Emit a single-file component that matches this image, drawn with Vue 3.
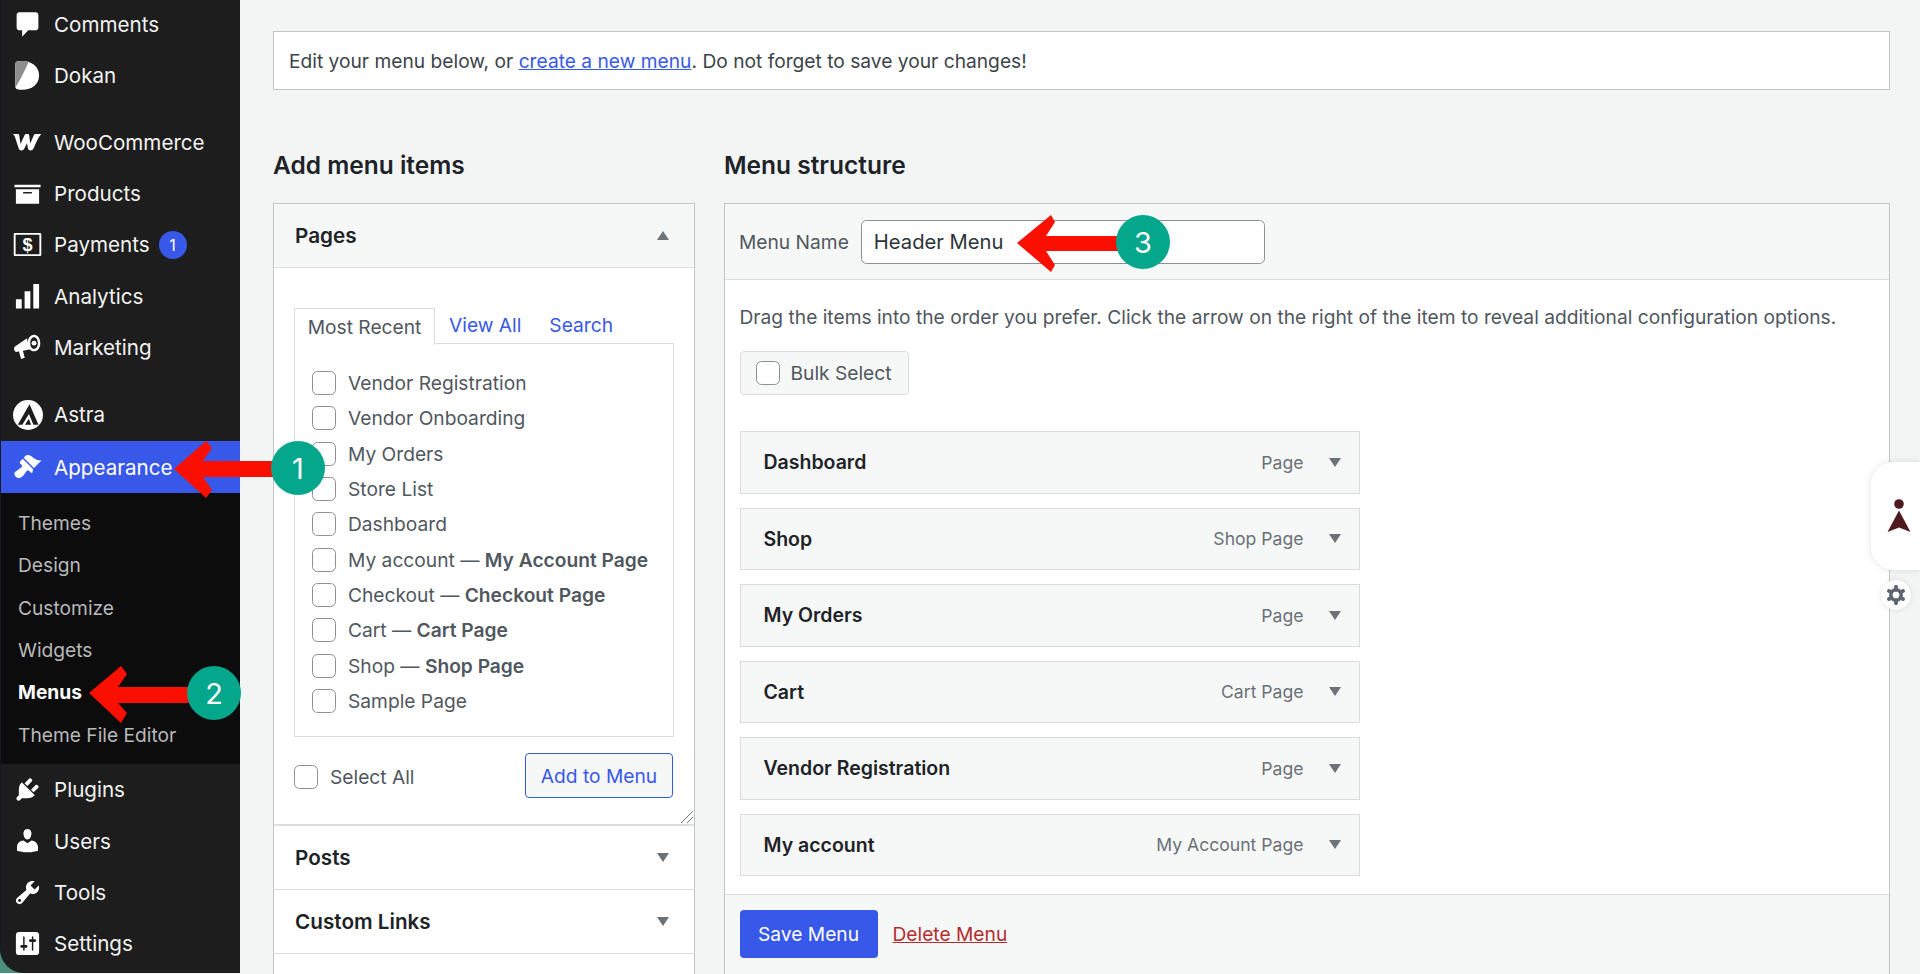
<script setup>
const pages = [
  ['Vendor Registration'], ['Vendor Onboarding'], ['My Orders'], ['Store List'], ['Dashboard'],
  ['My account', 'My Account Page'], ['Checkout', 'Checkout Page'], ['Cart', 'Cart Page'], ['Shop', 'Shop Page'], ['Sample Page'],
]
const items = [
  ['Dashboard', 'Page'], ['Shop', 'Shop Page'], ['My Orders', 'Page'], ['Cart', 'Cart Page'],
  ['Vendor Registration', 'Page'], ['My account', 'My Account Page'],
]
const subs = ['Themes', 'Design', 'Customize', 'Widgets', 'Menus', 'Theme File Editor']
const lower = [
  { n: 'Plugins', d: 'M13.11 4.36L9.87 7.6 8 5.73l3.24-3.24c.35-.34 1.05-.2 1.56.32.52.51.66 1.21.31 1.55zm-8 1.77l.91-1.12 9.01 9.01-1.19.84c-.71.71-2.63 1.16-3.82 1.16H6.14L4.9 17.26c-.59.59-1.54.59-2.12 0-.59-.58-.59-1.53 0-2.12l1.24-1.24v-3.88c0-1.13.4-3.19 1.09-3.89zm7.26 3.97l3.24-3.24c.34-.35 1.04-.21 1.55.31.52.51.66 1.21.31 1.55l-3.24 3.25z' },
  { n: 'Users', d: 'M10 9.25c-2.27 0-2.73-3.44-2.73-3.44C7 4.02 7.82 2 9.97 2c2.16 0 2.98 2.02 2.71 3.81 0 0-.41 3.44-2.68 3.44zm0 2.57L12.72 10c2.39 0 4.52 2.33 4.52 4.53v2.49s-3.65 1.13-7.24 1.13c-3.65 0-7.24-1.13-7.24-1.13v-2.49c0-2.25 1.94-4.48 4.47-4.48z' },
  { n: 'Tools', d: 'M16.68 9.77c-1.34 1.34-3.3 1.67-4.95.99l-5.41 6.52c-.99.99-2.59.99-3.58 0s-.99-2.59 0-3.57l6.52-5.42c-.68-1.65-.35-3.61.99-4.95 1.28-1.28 3.12-1.62 4.72-1.06l-2.89 2.89 2.82 2.82 2.86-2.87c.53 1.58.18 3.39-1.08 4.65zM3.81 16.21c.4.39 1.04.39 1.43 0 .4-.4.4-1.04 0-1.43-.39-.4-1.03-.4-1.43 0-.39.39-.39 1.03 0 1.43z' },
  { n: 'Settings', d: 'M18 16V4c0-1.1-.9-2-2-2H4c-1.1 0-2 .9-2 2v12c0 1.1.9 2 2 2h12c1.1 0 2-.9 2-2zM8 11h1c.55 0 1 .45 1 1s-.45 1-1 1H8v1.5c0 .28-.22.5-.5.5s-.5-.22-.5-.5V13H6c-.55 0-1-.45-1-1s.45-1 1-1h1V5.5c0-.28.22-.5.5-.5s.5.22.5.5V11zm5-2h-1c-.55 0-1-.45-1-1s.45-1 1-1h1V5.5c0-.28.22-.5.5-.5s.5.22.5.5V7h1c.55 0 1 .45 1 1s-.45 1-1 1h-1v5.5c0 .28-.22.5-.5.5s-.5-.22-.5-.5V9z' },
]
const pins = [
  { n: 1, cls: 'pin1' }, { n: 2, cls: 'pin2' }, { n: 3, cls: 'pin3' },
]
</script>

<template>
  <div class="page">
    <aside class="wrap">
      <nav class="side">
        <a class="it"><svg class="ic" viewBox="0 0 20 20"><path d="M4.5 1.5h11c1.2 0 2 .8 2 2v8.500c0 1.200-.8 2-2 2H10.500l-4.200 4.500v-4.500H4.500c-1.200 0-2-.8-2-2V3.500c0-1.200.8-2 2-2z" /></svg>Comments</a>
        <a class="it"><svg class="ic" viewBox="0 0 20 20"><path d="M2.800.4C9.500-1 18 1.900 18 10c0 7.500-7.600 11.200-15.200 9.400-1-.4-1.300-1.200-1.300-2.700V3c0-1.200.3-2.300 1.300-2.600z" /><path fill="#8e8e8e" d="M2.800.4C5-.1 8-.2 11 .4 8 7 5 13 1.500 18.500V3c0-1.200.3-2.300 1.300-2.600z" /></svg>Dokan</a>
        <div class="gap"></div>
        <a class="it"><svg class="woo" viewBox="0 0 30 18"><path d="M.5 1h5.300c.8 0 1.300.5 1.400 1.300l1.300 8.700 4-8.700c.4-.8.900-1.300 1.800-1.300h1.400c.9 0 1.300.5 1.500 1.300l1 8.200 3.600-8.200c.4-.9 1.100-1.300 2-1.300h5.700c-1.800 1.400-3.700 4.600-7.600 13.800-.9 2.100-2 2.700-3.300 2.700-1.600 0-2.500-.9-2.800-2.700l-.8-4.600-2.400 4.800c-.9 1.800-2 2.500-3.200 2.500-1.700 0-2.600-1-3-2.900L3 4.200C2.700 2.700 1.800 1.600.5 1z" /></svg>WooCommerce</a>
        <a class="it"><svg class="ic" viewBox="0 0 20 20"><path d="M19 4v1.700H1V4h18zM2 7h16v10H2V7zm11 3V9H7v1h6z" /></svg>Products</a>
        <a class="it"><svg class="ic" viewBox="0 0 20 20"><path fill-rule="evenodd" d="M1.500 2h17c.6 0 1 .4 1 1v14c0 .6-.4 1-1 1h-17c-.6 0-1-.4-1-1V3c0-.6.4-1 1-1zM1.800 3.300v13.400h16.400V3.300H1.800z" /><text x="10" y="14.400" class="dollar">$</text></svg>Payments<span class="badge">1</span></a>
        <a class="it"><svg class="ic" viewBox="0 0 20 20"><path d="M18 19V2h-4v17h4zm-6 0V7H8v12h4zm-6 0v-6.500H2V19h4z" /></svg>Analytics</a>
        <a class="it"><svg class="ic" viewBox="0 0 20 20"><path d="M.8 11.200c-.2-.9.200-1.800 1.100-2.200l7.800-5.300c.3 3 .9 5 2.400 7.500l-5.200 1-.1 .1 1.300 4.800-2.500.9-1.500-5.300-1.400.3c-1 .2-2-.7-1.900-1.800z" /><path fill-rule="evenodd" d="M14.500 1.200c2.600 0 4.300 2.600 4.300 5.800s-1.700 5.600-4.300 5.600-4.400-2.400-4.400-5.600 1.800-5.800 4.400-5.800zm0 1.800c-1.500 0-2.600 1.800-2.600 4s1.100 3.900 2.600 3.900 2.600-1.700 2.600-3.900S16 3 14.500 3z" /><circle cx="14.500" cy="7" r="1.700" /></svg>Marketing</a>
        <div class="gap second"></div>
        <a class="it"><svg class="ic big" viewBox="0 0 20 20"><circle cx="10" cy="10" r="10" /><path fill="#1d1d1d" d="M11 2.800L17 16.500h-3.400l-3-7.200-4.400 7.200H3.200zM10.500 12.500l1.600 4H8z" /></svg>Astra</a>
        <a class="it active"><svg class="ic" viewBox="0 0 20 20"><path d="M14.480 11.060L7.410 3.990l1.500-1.500c.5-.56 2.300-.47 3.510.32 1.210.8 1.430 1.280 2.910 2.100 1.180.64 2.450 1.260 4.450.85zm-.71.71L6.700 4.700 4.930 6.470c-.39.39-.39 1.020 0 1.410l1.060 1.060c.39.39.39 1.030 0 1.420-.6.6-1.430 1.110-2.210 1.690-.35.26-.7.53-1.010.84C1.430 13.230 0 15 2 17c2 2 3.770.57 5.100-.77.3-.31.58-.66.84-1.010.58-.78 1.090-1.610 1.690-2.210.39-.39 1.020-.39 1.410 0l1.060 1.060c.39.39 1.020.39 1.410 0z" /></svg>Appearance</a>
        <div class="subs">
          <a v-for="s in subs" :key="s" class="sub" :class="{ cur: s === 'Menus' }">{{ s }}</a>
        </div>
        <a v-for="l in lower" :key="l.n" class="it"><svg class="ic" viewBox="0 0 20 20"><path :d="l.d" /></svg>{{ l.n }}</a>
      </nav>
    </aside>

    <main class="main">
      <div class="notice">Edit your menu below, or <a class="lnk">create a new menu</a>. Do not forget to save your changes!</div>
      <div class="cols">
        <section class="left">
          <h2>Add menu items</h2>
          <div class="acc">
            <div class="acc-head grey"><b>Pages</b><i class="tri up"></i></div>
            <div class="acc-body">
              <div class="tabs">
                <span class="tab">Most Recent</span>
                <a class="tablink">View All</a>
                <a class="tablink">Search</a>
              </div>
              <div class="list">
                <label v-for="p in pages" :key="p[0]" class="row">
                  <span class="cb"></span>
                  <span>{{ p[0] }}<template v-if="p[1]"> — <b>{{ p[1] }}</b></template></span>
                </label>
              </div>
              <div class="sel">
                <label class="selall"><span class="cb"></span>Select All</label>
                <button class="add">Add to Menu</button>
              </div>
              <svg class="grip" viewBox="0 0 12 12"><path d="M0 12L12 0M6 12l6-6" /></svg>
            </div>
            <div class="acc-head"><b>Posts</b><i class="tri"></i></div>
            <div class="acc-head"><b>Custom Links</b><i class="tri"></i></div>
          </div>
        </section>

        <section class="right">
          <h2>Menu structure</h2>
          <div class="box">
            <div class="box-head">
              <span>Menu Name</span>
              <input class="name" value="Header Menu" />
            </div>
            <div class="box-body">
              <p class="desc">Drag the items into the order you prefer. Click the arrow on the right of the item to reveal additional configuration options.</p>
              <div class="bulk"><span class="cb"></span>Bulk Select</div>
              <div class="mi" v-for="m in items" :key="m[0]">
                <b>{{ m[0] }}</b>
                <span class="type">{{ m[1] }}</span>
                <i class="tri small"></i>
              </div>
            </div>
            <div class="box-foot">
              <button class="save">Save Menu</button>
              <a class="del">Delete Menu</a>
            </div>
          </div>
        </section>
      </div>
    </main>

    <div class="widget">
      <svg viewBox="0 0 24 34" class="wicon"><circle cx="12" cy="5" r="4.800" /><path d="M12 11.500L23.500 33 12 28.500 .5 33z" /></svg>
    </div>
    <div class="gear">
      <svg viewBox="0 0 20 20">
        <circle cx="10" cy="10" r="5.200" />
        <g>
          <path d="M10 1.800v3M10 15.200v3" />
          <path d="M2.900 5.900l2.600 1.500M14.500 12.600l2.600 1.500" />
          <path d="M17.100 5.900l-2.600 1.500M5.500 12.600l-2.600 1.500" />
        </g>
      </svg>
    </div>

    <svg class="arrows" viewBox="0 0 1920 974">
      <polygon points="174,469 206,441 212,448 203,461 280,461 280,477 203,477 212,490 206,498" />
      <polygon points="89,693 121,666 127,674 118,687 195,687 195,703 118,703 127,713 121,723" />
      <polygon points="1017,243 1051,215 1055,222 1046,236 1120,236 1120,251 1046,251 1055,265 1051,272" />
    </svg>
    <div v-for="p in pins" :key="p.n" class="pin" :class="p.cls">{{ p.n }}</div>
  </div>
</template>

<style scoped>
.page {
  position: relative;
  display: flex;
  width: 1920px;
  height: 974px;
  overflow: hidden;
  background: #f3f5f5;
  font-family: Inter, "Liberation Sans", sans-serif;
  color: #50575e;
  font-size: 19.200px;
}
.wrap {
  width: 240px;
  flex: none;
  height: 973px;
  background: linear-gradient(#1d1d1d 95%, #4d8f7c 95%);
}
.side {
  height: 974px;
  margin-top: -1px;
  overflow: hidden;
  background: #1d1d1d;
  border-bottom-left-radius: 24px;
  border-left: 1px solid #141a1f;
  width: 239px;
}
.it {
  display: flex;
  align-items: center;
  height: 51.300px;
  padding-left: 53px;
  position: relative;
  color: #f2f2f2;
  font-size: 20.600px;
  white-space: nowrap;
}
.ic {
  position: absolute;
  left: 12px;
  top: 11px;
  width: 29px;
  height: 29px;
  fill: #fff;
}
.ic.big {
  width: 30px;
  height: 30px;
  top: 10.500px;
}
.woo {
  position: absolute;
  left: 11px;
  top: 16.500px;
  width: 30px;
  height: 18px;
  fill: #fff;
}
.dollar {
  font: 700 12.500px "Liberation Sans", sans-serif;
  text-anchor: middle;
  fill: #fff;
}
.gap {
  height: 15px;
}
.gap.second {
  height: 16px;
}
.badge {
  width: 28px;
  height: 28px;
  border-radius: 50%;
  background: #3858e9;
  font-size: 16px;
  margin-left: 9px;
  display: flex;
  align-items: center;
  justify-content: center;
  color: #fff;
}
.active {
  background: #3858e9;
  color: #fff;
  margin-top: 1px;
}
.subs {
  background: #0c0c0c;
  height: 271.500px;
  padding: 9px 0 0 17px;
  box-sizing: border-box;
}
.sub {
  display: flex;
  align-items: center;
  height: 42.400px;
  color: #b8b9ba;
}
.cur {
  color: #fff;
  font-weight: 700;
}
.main {
  flex: 1;
  min-width: 0;
  padding: 31px 30px 0 33px;
  box-sizing: border-box;
}
.notice {
  height: 59px;
  box-sizing: border-box;
  background: #fff;
  border: 1.500px solid #c3c4c7;
  display: flex;
  align-items: center;
  padding-left: 15px;
  color: #3c434a;
  white-space: pre-wrap;
}
.lnk {
  color: #3858e9;
  text-decoration: underline;
}
.cols {
  display: flex;
  gap: 29px;
  margin-top: 56px;
}
.left {
  width: 422px;
  flex: none;
}
.right {
  flex: 1;
}
h2 {
  font-size: 24.500px;
  line-height: 38px;
  margin: 0 0 19px;
  font-weight: 600;
  color: #1d2327;
}
.acc {
  border: 1.500px solid #c3c4c7;
  border-bottom: 0;
  background: #fff;
  height: 790px;
  box-sizing: border-box;
}
.acc-head {
  height: 64px;
  display: flex;
  align-items: center;
  justify-content: space-between;
  padding: 0 25px 0 21px;
  border-bottom: 1.500px solid #dcdcde;
  box-sizing: border-box;
  color: #1d2327;
  font-size: 20.700px;
}
.acc-head b {
  font-weight: 600;
}
.grey {
  background: #f6f7f7;
}
.tri {
  width: 0;
  height: 0;
  border-left: 6px solid transparent;
  border-right: 6px solid transparent;
  border-top: 9px solid #6d7277;
}
.tri.up {
  border-top: 0;
  border-bottom: 9px solid #6d7277;
}
.acc-body {
  position: relative;
  height: 558px;
  padding: 39px 20px 0;
  box-sizing: border-box;
  border-bottom: 2px solid #dcdcde;
}
.tabs {
  display: flex;
  align-items: center;
  height: 36px;
  color: #3858e9;
}
.tab {
  height: 36.500px;
  width: 141px;
  flex: none;
  align-self: flex-start;
  margin-top: 1px;
  box-sizing: border-box;
  border: 1.500px solid #dcdcde;
  border-bottom: 0;
  background: #fff;
  color: #50575e;
  display: flex;
  align-items: center;
  justify-content: center;
  position: relative;
  z-index: 1;
}
.tablink {
  margin-left: 14px;
  margin-right: 14px;
}
.list {
  height: 394px;
  box-sizing: border-box;
  border: 1.500px solid #dcdcde;
  padding: 21.200px 0 0 17px;
}
.row {
  display: flex;
  align-items: center;
  gap: 12px;
  height: 35.350px;
  white-space: pre-wrap;
}
.row b {
  font-weight: 600;
}
.cb {
  width: 24px;
  height: 24px;
  flex: none;
  box-sizing: border-box;
  border: 1.500px solid #8c8f94;
  border-radius: 5.500px;
  background: #fff;
}
.sel {
  display: flex;
  justify-content: space-between;
  align-items: center;
  margin-top: 16px;
  padding-right: 1px;
}
.selall {
  display: flex;
  align-items: center;
  gap: 12px;
  padding-top: 2px;
}
.add {
  width: 148px;
  height: 45px;
  box-sizing: border-box;
  background: #f6f7f7;
  border: 1.500px solid #3858e9;
  border-radius: 4px;
  color: #3858e9;
  font: 19.200px Inter, "Liberation Sans", sans-serif;
  padding: 0;
}
.grip {
  position: absolute;
  right: 1px;
  bottom: 1px;
  width: 12px;
  height: 12px;
  stroke: #6d7277;
  stroke-width: 1;
  fill: none;
}
.box {
  border: 1.500px solid #c3c4c7;
  border-bottom: 0;
  background: #fff;
  height: 790px;
  box-sizing: border-box;
  display: flex;
  flex-direction: column;
}
.box-head {
  height: 76px;
  flex: none;
  box-sizing: border-box;
  border-bottom: 1.500px solid #dcdcde;
  background: #f6f7f7;
  display: flex;
  align-items: center;
  gap: 12px;
  padding-left: 14px;
}
.name {
  width: 404.500px;
  height: 44px;
  box-sizing: border-box;
  border: 1.500px solid #8c8f94;
  border-radius: 5.500px;
  background: #fff;
  padding: 0 12px;
  font: 20.200px Inter, "Liberation Sans", sans-serif;
  color: #2c3338;
  outline: none;
}
.box-body {
  height: 614px;
  flex: none;
  box-sizing: border-box;
  padding: 0 0 0 14.500px;
}
.desc {
  margin: 0;
  padding-top: 22px;
  line-height: 30px;
  height: 71px;
  box-sizing: border-box;
  white-space: nowrap;
}
.bulk {
  width: 169px;
  height: 44px;
  box-sizing: border-box;
  border: 1.500px solid #dcdcde;
  border-radius: 4px;
  background: #f6f7f7;
  display: flex;
  align-items: center;
  gap: 11px;
  padding-left: 15px;
  margin-bottom: 36px;
}
.mi {
  width: 620px;
  height: 62.500px;
  box-sizing: border-box;
  border: 1.500px solid #dcdcde;
  background: #f6f7f7;
  display: flex;
  align-items: center;
  padding: 0 18px 0 23px;
  margin-bottom: 14px;
  color: #1d2327;
  font-size: 19.500px;
}
.mi b {
  font-weight: 600;
}
.type {
  margin-left: auto;
  margin-right: 25px;
  color: #6b7177;
  font-size: 17.600px;
}
.box-foot {
  flex: 1;
  border-top: 1.500px solid #dcdcde;
  background: #f6f7f7;
  display: flex;
  align-items: flex-start;
  gap: 15px;
  padding: 15px 0 0 14.500px;
}
.save {
  width: 138px;
  height: 48px;
  background: #3858e9;
  border: 0;
  border-radius: 4px;
  color: #fff;
  font: 19.200px Inter, "Liberation Sans", sans-serif;
  padding: 0;
}
.del {
  color: #b32d2e;
  text-decoration: underline;
  line-height: 48px;
}
.widget {
  position: absolute;
  right: 0;
  top: 462px;
  width: 49px;
  height: 108px;
  background: #fff;
  border-radius: 22px 0 0 22px;
  box-shadow: 0 0 6px rgba(0, 0, 0, .12);
  display: flex;
  align-items: center;
  padding-left: 16px;
  box-sizing: border-box;
}
.wicon {
  width: 24px;
  height: 34px;
  fill: #4f1a1f;
}
.gear {
  position: absolute;
  left: 1881px;
  top: 580px;
  width: 30px;
  height: 30px;
  border-radius: 50%;
  background: #fff;
  box-shadow: 0 0 5px rgba(0, 0, 0, .12);
  display: flex;
  align-items: center;
  justify-content: center;
}
.gear svg {
  width: 20px;
  height: 20px;
  fill: none;
  stroke: #5f6670;
}
.gear circle {
  stroke-width: 3.500;
}
.gear path {
  stroke-width: 3.800;
  stroke-linecap: round;
}
.arrows {
  position: absolute;
  inset: 0;
  width: 1920px;
  height: 974px;
  fill: #fb0f00;
  pointer-events: none;
}
.pin {
  position: absolute;
  width: 54px;
  height: 54px;
  border-radius: 50%;
  background: #04a68c;
  color: #fff;
  font-size: 29px;
  display: flex;
  align-items: center;
  justify-content: center;
}
.pin1 {
  left: 271px;
  top: 441px;
}
.pin2 {
  left: 187px;
  top: 666px;
}
.pin3 {
  left: 1116px;
  top: 215px;
}
</style>

<style>
html, body {
  margin: 0;
  overflow: hidden;
}
</style>
